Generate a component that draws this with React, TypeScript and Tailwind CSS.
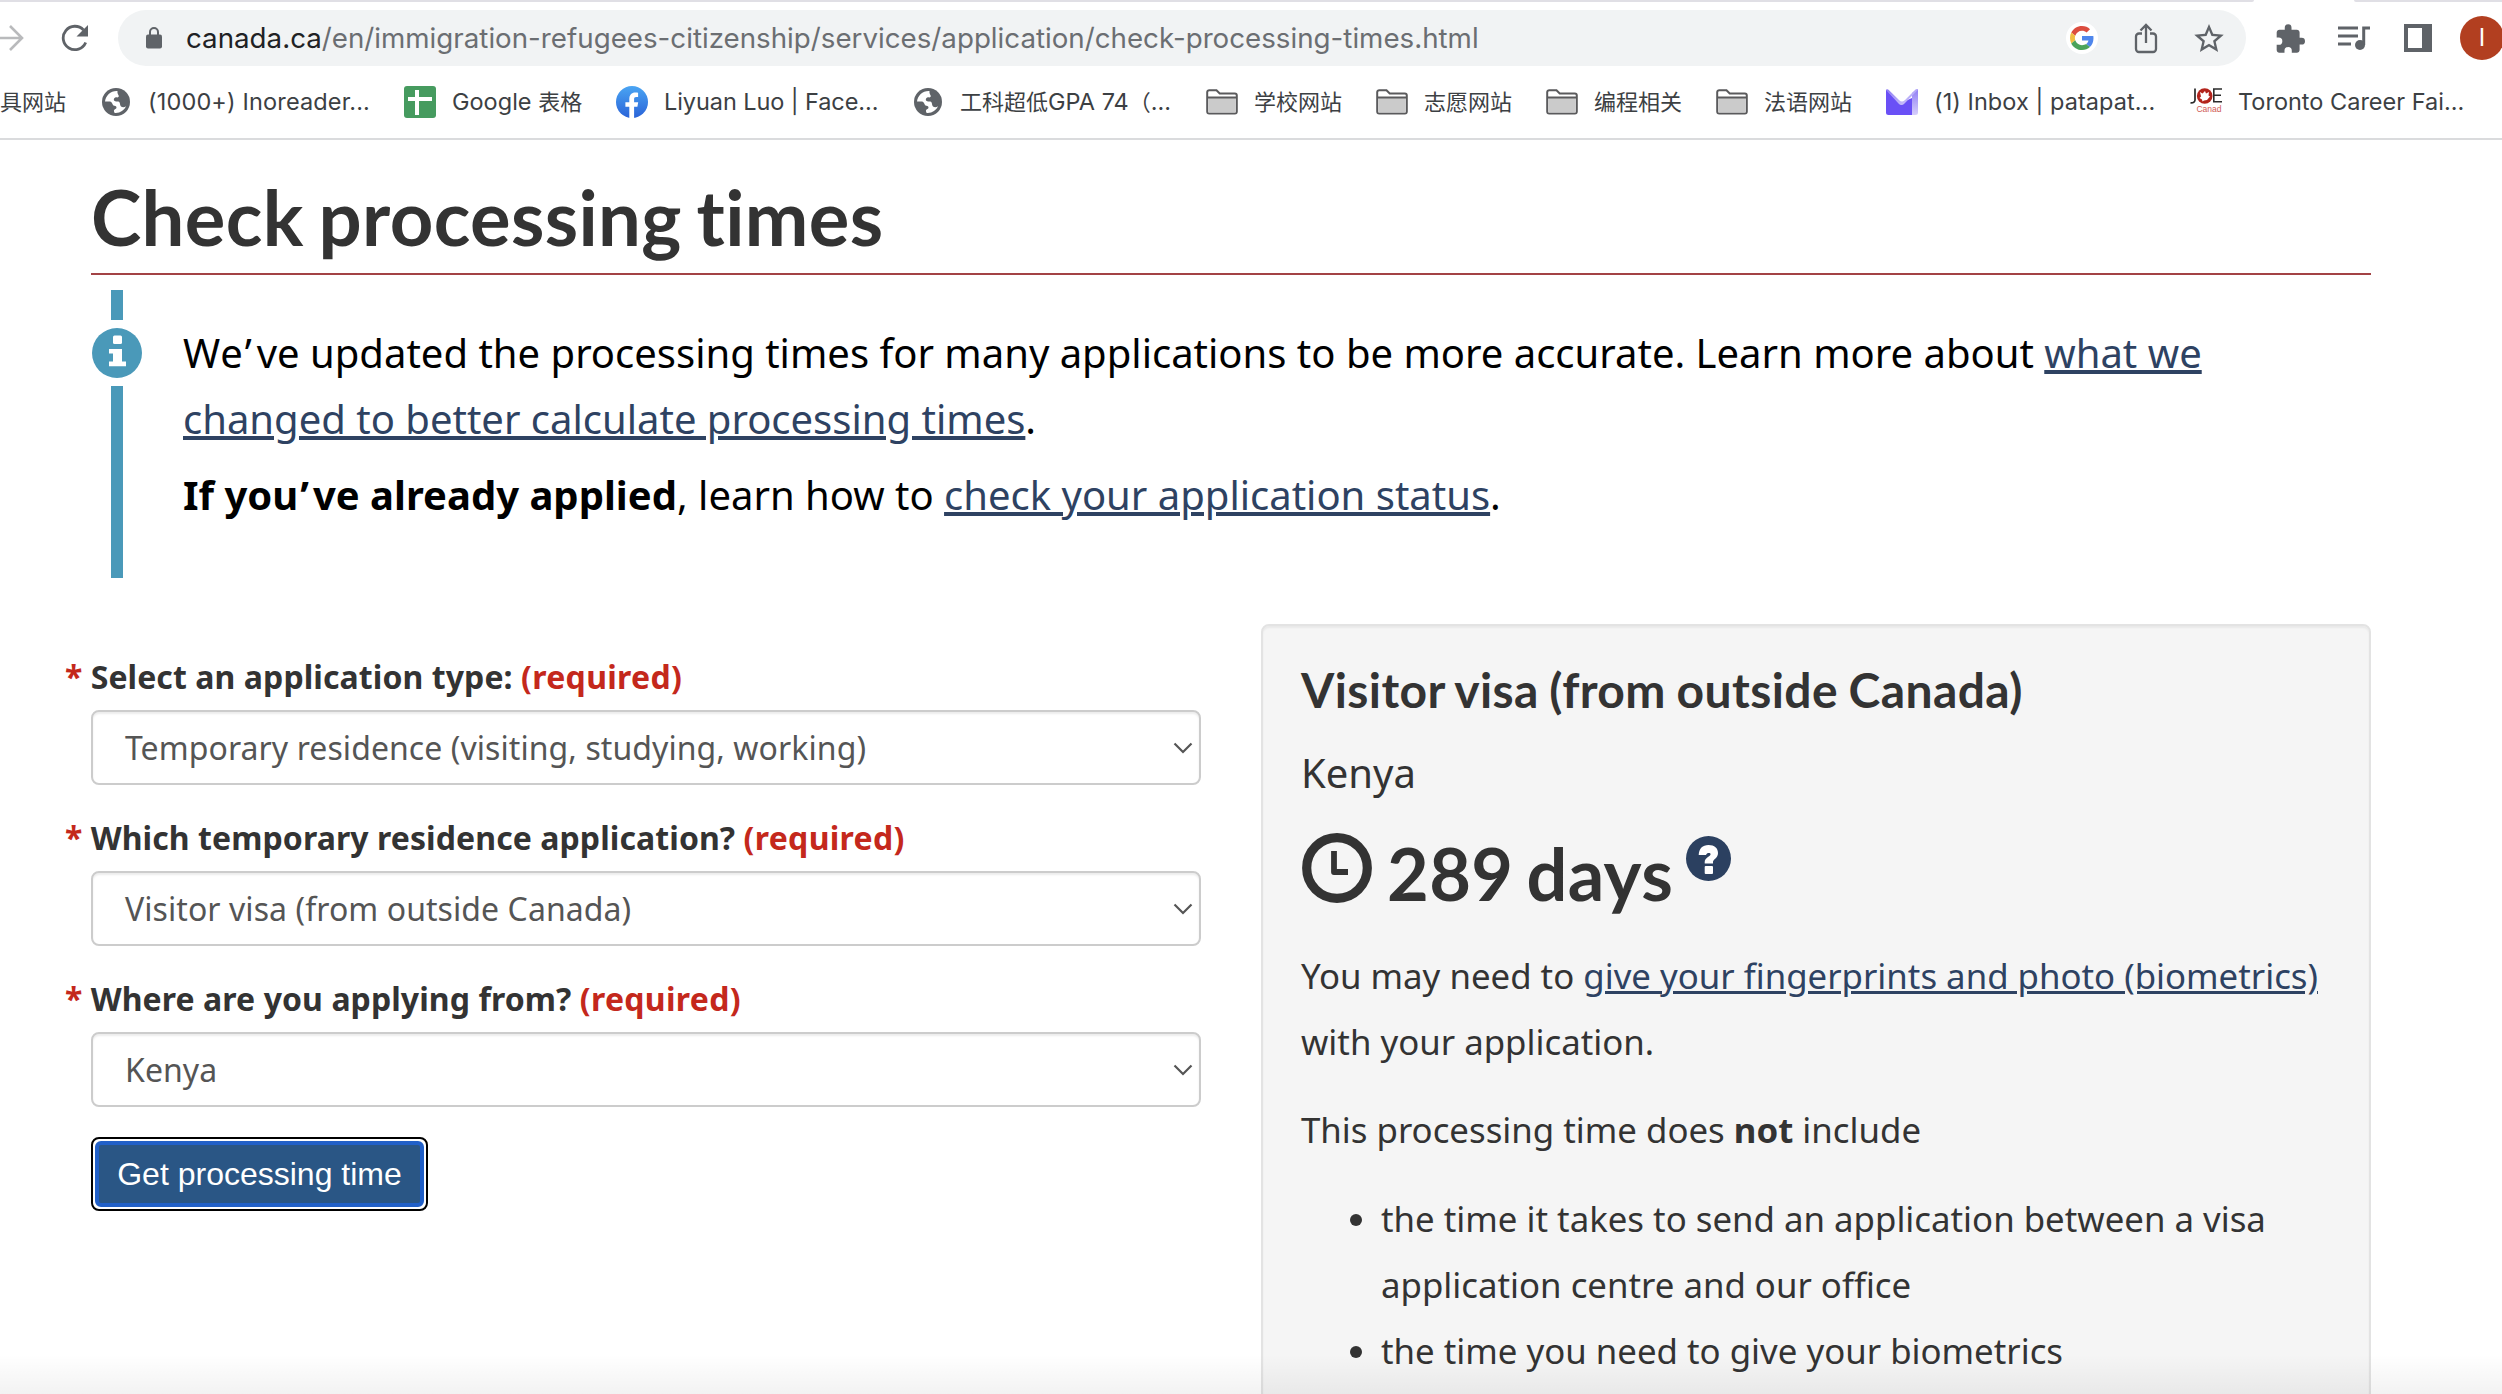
import type { ReactNode } from "react";

function Globe() {
  return (
    <svg viewBox="0 0 28 28" className="h-7 w-7 shrink-0">
      <circle cx="14" cy="14" r="14" fill="#5f6368" />
      <path
        d="M15.5 3C9 2.5 3.6 7.400 3 13.500H7.500C10 13.500 10 16 11.500 17.500C12.500 18.200 14.500 17.800 14.500 19.500C14.500 21 12.500 21 12 22.200C11.800 23.200 12.200 24.300 12.800 24.900C18 25.300 22 22.500 24 18.300C22.500 19.300 20.500 19.500 19 18.500C17.500 17.300 18.500 14.800 17 13.800C15.800 13 13.500 14 12.300 12.800C11.300 11.800 12 10 13.300 9.500C14.500 9.100 15.800 9.800 16.600 8.800C17.600 7.600 15 6.500 15.500 3Z"
        fill="#fff"
      />
    </svg>
  );
}

function Folder() {
  return (
    <svg viewBox="0 0 32 26" className="h-[26px] w-8 shrink-0">
      <path
        d="M1.200 3.200a2 2 0 0 1 2-2h7.300l3.200 3.300h15.100a2 2 0 0 1 2 2v16a2 2 0 0 1-2 2H3.200a2 2 0 0 1-2-2z"
        fill="#fff"
        stroke="#5a5a5c"
        strokeWidth="2"
      />
      <path d="M2.200 9h27.600v14.500H2.200z" fill="#cbcbcb" />
      <path d="M1.200 8.500h29.600" stroke="#5a5a5c" strokeWidth="2" />
    </svg>
  );
}

function Sheets() {
  return (
    <svg viewBox="0 0 32 32" className="h-8 w-8 shrink-0">
      <rect width="32" height="32" rx="3" fill="#469b5f" />
      <path d="M13 4v25M4 13h24" stroke="#fff" strokeWidth="4" />
    </svg>
  );
}

function Facebook() {
  return (
    <svg viewBox="0 0 32 32" className="h-8 w-8 shrink-0">
      <defs>
        <linearGradient id="fb" x1="0" y1="0" x2="0" y2="1">
          <stop offset="0" stopColor="#4aa5f3" />
          <stop offset="1" stopColor="#2a63d8" />
        </linearGradient>
      </defs>
      <circle cx="16" cy="16" r="16" fill="url(#fb)" />
      <path
        d="M13.300 32V20.800H9.400V16.200h3.900v-2.900c0-4.600 2.300-6.800 6-6.800 1.100 0 2 .1 2.800.3v4.100h-2c-1.500 0-2 .9-2 2.100v3.200h4.100l-.8 4.600h-3.300V32z"
        fill="#fff"
      />
    </svg>
  );
}

function Mail() {
  return (
    <svg viewBox="0 0 32 26" className="h-[26px] w-8 shrink-0">
      <defs>
        <linearGradient id="flap" x1="0" y1="0" x2="1" y2="1">
          <stop offset="0" stopColor="#8b78f4" />
          <stop offset="1" stopColor="#d9d3fb" />
        </linearGradient>
        <linearGradient id="side" x1="0" y1="1" x2="0" y2="0">
          <stop offset="0" stopColor="#d6cffb" />
          <stop offset="1" stopColor="#8f7cf5" />
        </linearGradient>
      </defs>
      <path d="M0 .5L13.500 14.500 26 9V26H2.500A2.500 2.500 0 0 1 0 23.500z" fill="#6a50f6" />
      <path d="M26 4L31 .3C31.500 0 32 .2 32 .8V23.500A2.500 2.500 0 0 1 29.500 26H26z" fill="url(#side)" />
      <path d="M0 .8C.8 0 2 0 2.800 1L13 11c2 2 4 2 6 0L29.500.6C30.200 0 31.300 0 32 .8L18.500 14.500c-2 2-4 2-6 0z" fill="url(#flap)" />
    </svg>
  );
}

function Joe() {
  return (
    <svg viewBox="0 0 32 32" className="h-8 w-8 shrink-0">
      <path d="M5 2.500V14Q4.800 17 .5 16.800" fill="none" stroke="#2b2b2b" strokeWidth="1.700" />
      <path d="M32 3H23.800V15.800H32M23.800 9.200H31" fill="none" stroke="#2b2b2b" strokeWidth="1.600" />
      <circle cx="14.700" cy="10" r="7.800" fill="#b3241c" />
      <path d="M10 6l2.500 1.500L15 5l1 2.500 3-1.500-.5 3.500 1.500 1-3 3.500-3 .5-1.500 1-.5-2L9.500 12l1.500-1.500z" fill="#fff" />
      <text x="6.500" y="25.500" fontSize="8.500" fill="#cf5a55" fontFamily="Liberation Sans" textLength="25">
        Canad
      </text>
    </svg>
  );
}

const bookmarks: { label: string; icon: ReactNode; width: string }[] = [
  { label: "(1000+) Inoreader...", icon: <Globe />, width: "w-[304px] tracking-[0.150px]" },
  { label: "Google 表格", icon: <Sheets />, width: "w-[212px]" },
  { label: "Liyuan Luo | Face...", icon: <Facebook />, width: "w-[296px] tracking-[-0.080px]" },
  { label: "工科超低GPA 74（...", icon: <Globe />, width: "w-[294px]" },
  { label: "学校网站", icon: <Folder />, width: "w-[170px]" },
  { label: "志愿网站", icon: <Folder />, width: "w-[170px]" },
  { label: "编程相关", icon: <Folder />, width: "w-[170px]" },
  { label: "法语网站", icon: <Folder />, width: "w-[170px]" },
  { label: "(1) Inbox | patapat...", icon: <Mail />, width: "w-[304px] tracking-[0.060px]" },
  { label: "Toronto Career Fai...", icon: <Joe />, width: "w-[300px]" },
];

/* Chinese runs are set slightly smaller than the Latin text beside them. */
function BookmarkLabel({ text }: { text: string }) {
  return (
    <span>
      {text.split(/([\u4e00-\u9fff\uff08]+)/).map((run, i) => (
        <span key={i} className={i % 2 ? "text-[22px]" : ""}>
          {run}
        </span>
      ))}
    </span>
  );
}

function Browser() {
  return (
    <header className="h-[140px] border-b-2 border-[#dadbdd]">
      <div className="flex h-0.5 justify-between">
        <div className="w-[2254px] rounded-br-sm bg-[#e0dfe5]" />
        <div className="w-[148px] rounded-bl-sm bg-[#e0dfe5]" />
      </div>
      <div className="flex h-[72px] items-center">
        <svg viewBox="0 0 24 28" className="h-7 w-6 shrink-0" fill="none" stroke="#b9babc" strokeWidth="2.600">
          <path d="M0 14H21.500M10 2l12 12-12 12" />
        </svg>
        <svg viewBox="0 0 28 28" className="ml-[37px] h-7 w-7 shrink-0">
          <path d="M24.700 18.500A11.700 11.700 0 1 1 22.500 6" fill="none" stroke="#5f6368" strokeWidth="2.800" />
          <path d="M27 1v11.500H15.500z" fill="#5f6368" />
        </svg>
        <div className="ml-[29px] flex h-14 w-[2128px] shrink-0 items-center rounded-full bg-[#f1f3f4] pl-7">
          <svg viewBox="0 0 16 22" className="h-[22px] w-4 shrink-0">
            <rect y="7.500" width="16" height="14" rx="2" fill="#5f6368" />
            <path d="M4 8.500V5a4 4 0 0 1 8 0v3.500" fill="none" stroke="#5f6368" strokeWidth="2" />
          </svg>
          <span className="ml-6 w-[1880px] shrink-0 whitespace-nowrap font-['Inter'] text-[27.730px] leading-10 text-[#6b6e72]">
            <span className="text-[#202124]">canada.ca</span>
            /en/immigration-refugees-citizenship/services/application/check-processing-times.html
          </span>
          <div className="flex h-8 w-8 shrink-0 items-center justify-center rounded-full bg-white">
            <svg viewBox="0 0 48 48" className="h-6 w-6">
              <path fill="#dc4d3f" d="M24 9.500c3.540 0 6.710 1.220 9.210 3.600l6.850-6.850C35.900 2.380 30.470 0 24 0 14.620 0 6.510 5.380 2.560 13.220l7.980 6.190C12.430 13.720 17.740 9.500 24 9.500z" />
              <path fill="#4f86ec" d="M46.980 24.550c0-1.570-.15-3.090-.38-4.550H24v9.020h12.940c-.58 2.960-2.260 5.480-4.780 7.180l7.730 6c4.510-4.180 7.090-10.360 7.090-17.650z" />
              <path fill="#f1be42" d="M10.530 28.590c-.48-1.450-.76-2.990-.76-4.590s.27-3.140.76-4.590l-7.980-6.190C.92 16.460 0 20.120 0 24s.92 7.540 2.560 10.780l7.970-6.190z" />
              <path fill="#4ba35b" d="M24 48c6.480 0 11.930-2.130 15.890-5.810l-7.730-6c-2.150 1.450-4.920 2.300-8.160 2.300-6.260 0-11.570-4.220-13.470-9.910l-7.980 6.190C6.510 42.620 14.620 48 24 48z" />
            </svg>
          </div>
          <svg viewBox="0 0 24 32" className="ml-9 h-8 w-6 shrink-0" fill="none" stroke="#5f6368" strokeWidth="2.300">
            <path d="M8 11.500H5a3 3 0 0 0-3 3V27a3 3 0 0 0 3 3h14a3 3 0 0 0 3-3V14.500a3 3 0 0 0-3-3h-3M12 21V3M6.500 8.500L12 3l5.500 5.500" />
          </svg>
          <svg viewBox="2 2 20 19" className="ml-9 h-[28px] w-[30px] shrink-0" fill="#5f6368">
            <path d="M22 9.240l-7.190-.62L12 2 9.190 8.630 2 9.240l5.460 4.730L5.820 21 12 17.270 18.180 21l-1.630-7.030L22 9.240zM12 15.400l-3.760 2.270 1-4.280-3.320-2.880 4.380-.38L12 6.100l1.710 4.040 4.380.38-3.320 2.880 1 4.280L12 15.400z" />
          </svg>
        </div>
        <svg viewBox="1.500 1 21.500 21" className="ml-[30px] h-[29px] w-[29px] shrink-0" fill="#5f6368">
          <path d="M20.500 11H19V7c0-1.100-.9-2-2-2h-4V3.500a2.500 2.500 0 0 0-5 0V5H4c-1.100 0-1.990.9-1.990 2v3.800H3.500a2.700 2.700 0 0 1 0 5.400H2V20c0 1.100.9 2 2 2h3.800v-1.500a2.700 2.700 0 0 1 5.400 0V22H17c1.100 0 2-.9 2-2v-4h1.500a2.500 2.500 0 0 0 0-5z" />
        </svg>
        <svg viewBox="0 0 32 26" className="ml-[33px] h-[26px] w-8 shrink-0" fill="none" stroke="#5f6368" strokeWidth="3">
          <path d="M0 3h20M0 11h20M0 19h13M25.700 20V3H32" />
          <circle cx="22" cy="20" r="5" fill="#5f6368" stroke="none" />
        </svg>
        <svg viewBox="0 0 28 28" className="ml-[34px] h-7 w-7 shrink-0">
          <path fillRule="evenodd" d="M0 0h28v28H0zM4 4v20h14V4z" fill="#5f6368" />
        </svg>
        <div className="ml-7 flex h-11 w-11 shrink-0 items-center justify-center rounded-full bg-[#b23f20] font-['Inter'] text-2xl text-white">
          I
        </div>
      </div>
      <nav className="flex h-14 items-center whitespace-nowrap font-['Inter','Noto_Sans_CJK_SC',sans-serif] text-[23.500px] leading-8 text-[#3c4043]">
        <div className="w-[100px] shrink-0 text-[22px]">具网站</div>
        {bookmarks.map((b) => (
          <div key={b.label} className={`flex shrink-0 items-center gap-4 ${b.width}`}>
            <div className="flex w-8 shrink-0 justify-center">{b.icon}</div>
            <BookmarkLabel text={b.label} />
          </div>
        ))}
      </nav>
    </header>
  );
}

function Link({ children }: { children: ReactNode }) {
  return (
    <a href="#" className="text-[#2e4262] underline">
      {children}
    </a>
  );
}

function Field({ label, value }: { label: string; value: string }) {
  return (
    <div className="mb-[31px]">
      <div className="-ml-[26px] whitespace-pre text-[32px] font-bold leading-[44px]">
        <span className="text-[#c4281c]">* </span>
        <span className="tracking-[0.080px]">{label} </span>
        <span className="tracking-[0.300px] text-[#c4281c]">(required)</span>
      </div>
      <div className="mt-[11px] flex h-[75px] items-center justify-between rounded-lg border-2 border-[#ccc] bg-white pl-8 pr-1.5 text-[32px] tracking-[0.070px] text-[#555] shadow-[inset_0_2px_2px_rgba(0,0,0,0.075)]">
        <span>{value}</span>
        <svg viewBox="0 0 20 12" className="h-3 w-5" fill="none" stroke="#555" strokeWidth="2.200">
          <path d="M1.500 1.500L10 10l8.500-8.500" />
        </svg>
      </div>
    </div>
  );
}

function Alert() {
  return (
    <section className="mt-[15px] flex h-[288px]">
      <div className="flex w-[52px] flex-col items-center">
        <div className="h-[30px] w-3 bg-[#4a99b9]" />
        <svg viewBox="0 0 50 50" className="my-2 h-[50px] w-[50px] shrink-0">
          <circle cx="25" cy="25" r="25" fill="#4a99b9" />
          <rect x="21" y="7.500" width="9" height="8.500" rx="1.500" fill="#fff" />
          <path d="M17 21h13v12.500h4V38.200H17V33.500h4V25.500h-4z" fill="#fff" />
        </svg>
        <div className="w-3 grow bg-[#4a99b9]" />
      </div>
      <div className="ml-10 pt-[30px] text-[40px] leading-[66px] text-black">
        <p>
          W<span className="tracking-[2px]">e</span>
          <span className="tracking-[5px]">’</span>ve updated the processing times for many applications to be more
          accurate. Learn more about{" "}
          <Link>
            what we
            <br />
            changed to better calculate processing times
          </Link>
          .
        </p>
        <p className="mt-2.5">
          <strong>
            If yo<span className="tracking-[2px]">u</span>
            <span className="tracking-[4px]">’</span>ve already applied
          </strong>
          , learn how to <Link>check your application status</Link>.
        </p>
      </div>
    </section>
  );
}

function Result() {
  return (
    <section className="h-[820px] w-[1110px] rounded-lg border-2 border-[#e3e3e3] bg-[#f5f5f5] pl-[38px] pt-[35px] text-[34.800px] leading-[66px] shadow-[inset_0_2px_2px_rgba(0,0,0,0.05)]">
      <h2 className="font-['Lato'] text-[48px] font-bold leading-[58px] tracking-[0.400px] [font-variant-ligatures:none] [word-spacing:-1.500px]">
        Visitor visa (from outside Canada)
      </h2>
      <p className="mt-[21px] text-[40px]">Kenya</p>
      <div className="mt-[27px] flex h-20 font-['Lato'] text-[72px] font-bold leading-[80px]">
        <svg viewBox="0 0 70 70" className="ml-px h-[70px] w-[70px]" fill="none" stroke="#333">
          <circle cx="35" cy="35" r="30.300" strokeWidth="9.200" />
          <path d="M32 18v21h14" strokeWidth="5.800" strokeLinejoin="round" />
        </svg>
        <span className="ml-[15px] tracking-[0.400px] [word-spacing:-5px]">289 days</span>
        <svg viewBox="0 0 45 45" className="ml-[13px] mt-[3px] h-[45px] w-[45px]">
          <circle cx="22.500" cy="22.500" r="22.500" fill="#2b4060" />
          <path
            d="M12.700 19C13 12.500 16.500 9 22.500 9C28.500 9 32 12.200 32 17C32 22 27 23.500 27 26V27.500H18.700V26C18.700 21.500 24.600 20.500 24.600 18C24.600 16.400 20.500 16.400 20 19Z"
            fill="#fff"
          />
          <rect x="18.700" y="30" width="8.300" height="8" rx="1" fill="#fff" />
        </svg>
      </div>
      <p className="mt-[30px]">
        You may need to <Link>give your fingerprints and photo (biometrics)</Link>
        <br />
        with your application.
      </p>
      <p className="mt-[22px]">
        This processing time does <strong>not</strong> include
      </p>
      <ul className="mt-[23px] list-disc pl-20">
        <li>
          the time it takes to send an application between a visa
          <br />
          application centre and our office
        </li>
        <li>the time you need to give your biometrics</li>
      </ul>
    </section>
  );
}

export default function App() {
  return (
    <div className="relative h-[1394px] w-[2502px] overflow-hidden bg-white font-['Noto_Sans',sans-serif] text-[#333]">
      <Browser />
      <main className="ml-[91px] w-[2280px] pt-8">
        <h1 className="border-b-2 border-[#a34345] pb-[11px] font-['Lato'] text-[76px] font-bold leading-[90px] tracking-[0.350px] [font-variant-ligatures:none] [word-spacing:-4px]">
          Check processing times
        </h1>
        <Alert />
        <div className="mt-[46px] flex justify-between">
          <form className="w-[1110px] pt-[31px]">
            <Field label="Select an application type:" value="Temporary residence (visiting, studying, working)" />
            <Field label="Which temporary residence application?" value="Visitor visa (from outside Canada)" />
            <Field label="Where are you applying from?" value="Kenya" />
            <button
              type="button"
              className="-mt-px block h-[74px] w-[337px] rounded-lg border-2 border-black bg-white p-0.5"
            >
              <span className="flex h-full items-center justify-center rounded-md border-4 border-[#2160c8] bg-[#2a5685] font-['Liberation_Sans'] text-[32px] leading-none text-white">
                Get processing time
              </span>
            </button>
          </form>
          <Result />
        </div>
      </main>
      <div className="absolute inset-x-0 bottom-0 h-10 bg-gradient-to-b from-transparent to-black/5" />
    </div>
  );
}
